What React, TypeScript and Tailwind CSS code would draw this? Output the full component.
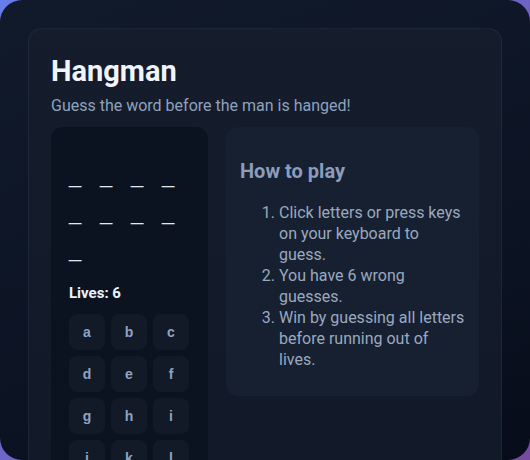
const LETTERS = "abcdefghijklmnopqrstuvwxyz".split("");
const WORD_LEN = 9;

export default function App() {
  return (
    <div className="h-screen w-full bg-[linear-gradient(135deg,#667eea_0%,#764ba2_100%)]" style={{ fontFamily: "Roboto, 'Noto Sans', sans-serif" }}>
      <div className="h-full w-full overflow-hidden rounded-[22px] bg-[linear-gradient(160deg,#111a2b_0%,#0c1424_60%,#070c19_100%)] px-[28px] pt-[28px]">
        <div className="rounded-[14px] border border-white/[0.05] bg-[linear-gradient(180deg,#151c2b_0%,#0f1828_100%)] px-[22px] pb-[22px] pt-[24px]">
          <h1 className="text-[29px] font-bold leading-[36px] text-[#f1f5f9]">Hangman</h1>
          <p className="mt-[6px] text-[16px] leading-[22px] text-[#8fa2bd]">Guess the word before the man is hanged!</p>
          <div className="mt-[10px] grid grid-cols-[157px_1fr] items-start gap-[18px]">
            <div className="rounded-[12px] bg-[#0b1220] px-[18px] pb-[18px] pt-[30px]">
              <div className="flex flex-wrap gap-x-[19px]">
                {Array.from({ length: WORD_LEN }).map((_, i) => (
                  <span
                    key={i}
                    className="block h-[37px] w-[12px] text-center text-[22px] leading-[37px] text-[#e2e8f0]"
                    style={{ fontFamily: "'Liberation Sans', Arial, sans-serif" }}
                  >
                    _
                  </span>
                ))}
              </div>
              <div className="mt-[14px] text-[15px] font-bold leading-[22px] text-[#eef2f7]">Lives: 6</div>
              <div className="mt-[10px] grid grid-cols-[36px_36px_36px] gap-[6px]">
                {LETTERS.map((l) => (
                  <button
                    key={l}
                    className="flex h-[36px] w-[36px] items-center justify-center rounded-[8px] bg-[#131a27] text-[14px] font-bold text-[#8da3c4]"
                    style={{ fontFamily: "'Liberation Sans', Arial, sans-serif" }}
                  >
                    {l}
                  </button>
                ))}
              </div>
            </div>
            <div className="rounded-[12px] bg-[#172031] px-[14px] pb-[26px] pt-[31px]">
              <h2 className="text-[20px] font-bold leading-[26px] text-[#8a9dbb]">How to play</h2>
              <ol className="mt-[18px] list-decimal pl-[39px] text-[16px] leading-[21px] text-[#9aa9bf]">
                <li>Click letters or press keys<br />on your keyboard to<br />guess.</li>
                <li>You have 6 wrong<br />guesses.</li>
                <li>Win by guessing all letters<br />before running out of<br />lives.</li>
              </ol>
            </div>
          </div>
        </div>
      </div>
    </div>
  );
}
